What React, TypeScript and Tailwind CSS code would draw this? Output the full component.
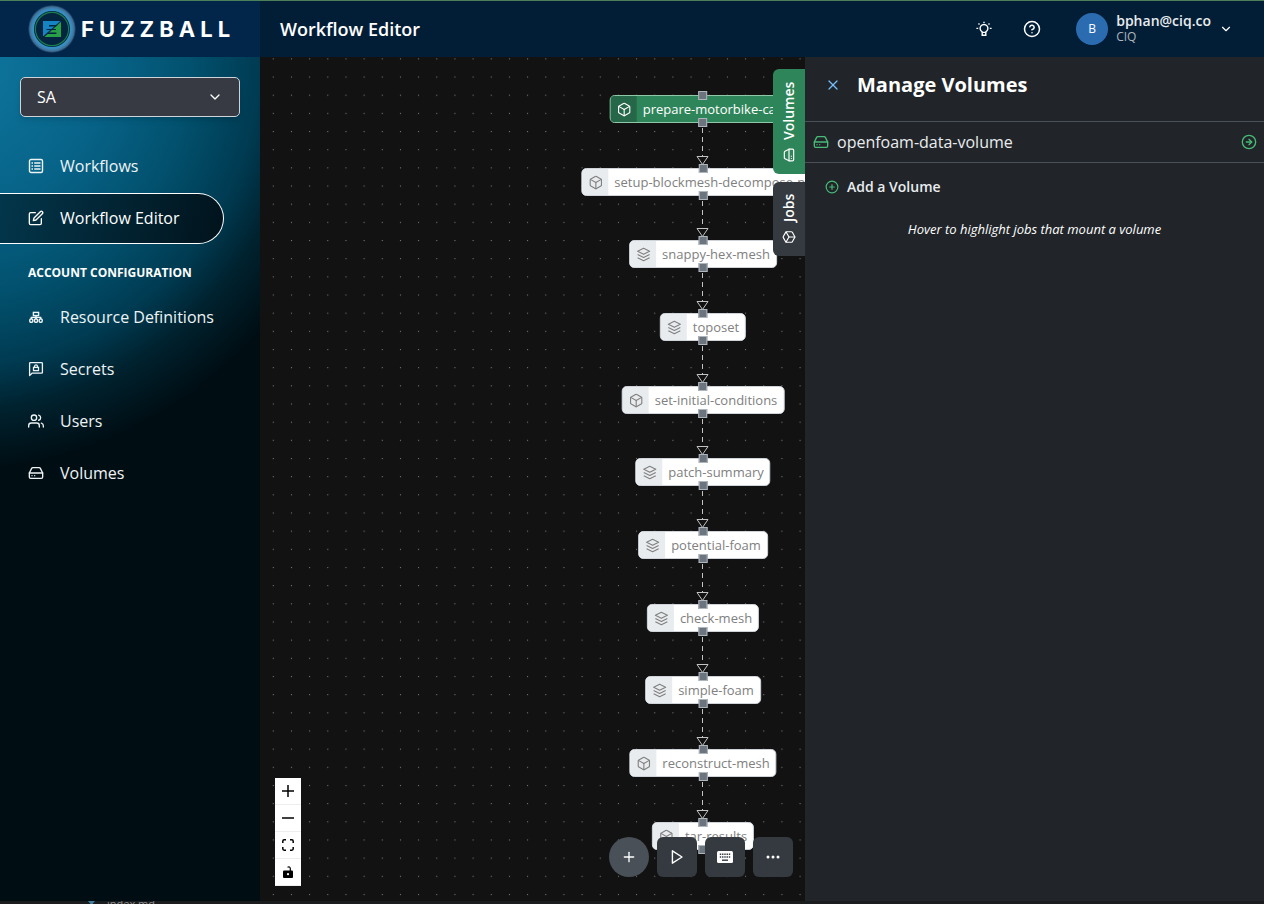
import type { ReactNode } from "react";
import { Box, ChevronDown, CircleArrowRight, CirclePlus, CircleQuestionMark, HardDrive, Plus, X } from "lucide-react";
import { BsThreeDots } from "react-icons/bs";
import { FiEdit, FiUsers } from "react-icons/fi";

type Job = { name: string; top: number; kind: "box" | "layers"; active?: boolean };

const jobs: Job[] = [
  { name: "prepare-motorbike-case", top: 38, kind: "box", active: true },
  { name: "setup-blockmesh-decompose-par", top: 111, kind: "box" },
  { name: "snappy-hex-mesh", top: 183, kind: "layers" },
  { name: "toposet", top: 256, kind: "layers" },
  { name: "set-initial-conditions", top: 329, kind: "box" },
  { name: "patch-summary", top: 401, kind: "layers" },
  { name: "potential-foam", top: 474, kind: "layers" },
  { name: "check-mesh", top: 547, kind: "layers" },
  { name: "simple-foam", top: 619, kind: "layers" },
  { name: "reconstruct-mesh", top: 692, kind: "box" },
  { name: "tar-results", top: 765, kind: "box" },
];

function ListIcon() {
  return (
    <svg width="16" height="16" viewBox="0 0 16 16" fill="none" stroke="currentColor" strokeWidth="1.4">
      <rect x="1.5" y="1.5" width="13" height="13" rx="1.5" />
      <path d="M3.5 5h1.5M6.2 5h6.3M3.5 8h1.5M6.2 8h6.3M3.5 11h1.5M6.2 11h6.3" />
    </svg>
  );
}

function HierarchyIcon() {
  return (
    <svg width="16" height="16" viewBox="0 0 16 16" fill="none" stroke="currentColor" strokeWidth="1.4">
      <rect x="5.4" y="3.4" width="5.2" height="3.2" />
      <path d="M8 6.6v3.4M3.3 10V8.4h9.4V10" />
      <rect x="1.8" y="10" width="3" height="3.2" rx="1" />
      <rect x="6.5" y="10" width="3" height="3.2" rx="1" />
      <rect x="11.2" y="10" width="3" height="3.2" rx="1" />
    </svg>
  );
}

function SecretIcon() {
  return (
    <svg width="16" height="16" viewBox="0 0 16 16" fill="none" stroke="currentColor" strokeWidth="1.3">
      <path d="M1.6 14.6V2.4q0-.8.8-.8h11.2q.8 0 .8.8v9q0 .8-.8.8H4z" strokeLinejoin="round" />
      <rect x="5.5" y="6.4" width="5" height="3.2" />
      <path d="M6.5 6.2V5.4a1.5 1.5 0 0 1 3 0v.8" />
    </svg>
  );
}

function BulbIcon() {
  return (
    <svg width="16" height="16" viewBox="0 0 16 16" fill="none" stroke="currentColor" strokeWidth="1.4">
      <path d="M6.2 11.4v-.6a3.9 3.9 0 1 1 3.6 0v.6z" />
      <path d="M6.2 11.4v2.8h3.6v-2.8" />
      <path d="M8 .8v1.2M2.5 2.6l1 1M13.5 2.6l-1 1M.4 7.4h1.8M13.8 7.4h1.8" />
    </svg>
  );
}

function LayersIcon() {
  return (
    <svg width="15" height="15" viewBox="0 0 16 16" fill="none" stroke="currentColor" strokeWidth="1.2" strokeLinejoin="round">
      <path d="M8 1.4 14.4 4.6 8 7.8 1.6 4.6z" />
      <path d="M1.6 8 8 11.2 14.4 8M1.6 11.4 8 14.6 14.4 11.4" />
    </svg>
  );
}

function KeyboardIcon() {
  return (
    <svg width="16" height="16" viewBox="0 0 16 16">
      <rect y="2" width="16" height="12" rx="1.5" fill="currentColor" />
      <path d="M2.8 5.2h10.4M2.8 8h10.4" stroke="#343a40" strokeWidth="1.4" strokeDasharray="1.4 .85" />
      <path d="M5 11.2h6" stroke="#343a40" strokeWidth="1.4" />
    </svg>
  );
}

function PlayIcon() {
  return (
    <svg width="16" height="16" viewBox="0 0 16 16" fill="none" stroke="currentColor" strokeWidth="1.4" strokeLinejoin="round">
      <path d="M3.4 1.8 13 8l-9.6 6.2z" />
    </svg>
  );
}

function Logo() {
  return (
    <svg width="48" height="48" viewBox="0 0 48 48">
      <defs>
        <radialGradient id="glow">
          <stop offset="0.74" stopColor="#2f97cf" />
          <stop offset="0.84" stopColor="#3d86b6" />
          <stop offset="0.93" stopColor="#3f6d94" />
          <stop offset="1" stopColor="#2a4f74" stopOpacity="0.2" />
        </radialGradient>
      </defs>
      <circle cx="24" cy="24" r="24" fill="url(#glow)" />
      <circle cx="24" cy="24" r="18" fill="#04253f" />
      <circle cx="24" cy="24" r="16.6" fill="none" stroke="#1c7d4c" strokeWidth="1.1" />
      <path d="M15 16h17.4L15.6 31H15z" fill="#1684c2" />
      <path d="M33 16.8V32H16.4z" fill="#27a047" />
      <path d="M21 20h8.6l-1.6 1.5h-7zM20 27.6h8.4V29H18.6zM19 24h9v1H18z" fill="#04253f" />
    </svg>
  );
}

function NavLink({ icon, label, active }: { icon: ReactNode; label: string; active?: boolean }) {
  return (
    <a
      href="#"
      className={
        active
          ? "flex h-[51px] w-56 items-center gap-4 rounded-r-full border border-l-0 border-white bg-[linear-gradient(100deg,#03364b,#01131c)] pb-0.5 pl-7 text-base text-white"
          : "flex h-[51px] items-center gap-4 pb-0.5 pl-7 text-base text-[#eef3f5]"
      }
    >
      {icon}
      {label}
    </a>
  );
}

function Handle({ className }: { className: string }) {
  return <span className={`absolute left-1/2 size-[9px] -translate-x-1/2 border border-[#adb5bd] bg-[#6c757d] ${className}`} />;
}

function JobNode({ job }: { job: Job }) {
  return (
    <div className="absolute left-[443px] -translate-x-1/2" style={{ top: job.top }}>
      <div
        className={
          job.active
            ? "flex h-7 items-stretch overflow-hidden rounded-[5px] border border-[#8fc7a8] bg-[#2f855a] text-white"
            : "flex h-7 items-stretch overflow-hidden rounded-[5px] border border-[#ced4da] bg-white text-[#808080]"
        }
      >
        <span className={job.active ? "flex w-[26px] items-center justify-center bg-[#276749]" : "flex w-[26px] items-center justify-center bg-[#e9ecef]"}>
          {job.kind === "box" ? <Box size={15} strokeWidth={1.8} /> : <LayersIcon />}
        </span>
        <span className="flex items-center px-1.5 pb-px text-[13px] leading-5 whitespace-nowrap">{job.name}</span>
      </div>
      <Handle className="-top-1" />
      <Handle className="-bottom-1" />
    </div>
  );
}

function Canvas() {
  return (
    <section className="relative min-w-0 flex-1 overflow-hidden bg-[#121212]">
      <svg className="absolute inset-0 size-full">
        <defs>
          <pattern id="dots" x="4.2" y="10.9" width="18.165" height="18.165" patternUnits="userSpaceOnUse">
            <circle cx="9.1" cy="9.1" r="0.6" fill="#8a8a8a" />
          </pattern>
        </defs>
        <rect width="100%" height="100%" fill="url(#dots)" />
        {jobs.slice(1).map((job, i) => (
          <g key={job.name} stroke="#c4c4c4" fill="none">
            <path d={`M442.5 ${jobs[i].top + 33}V${job.top - 12}`} strokeDasharray="5 4" />
            <path d={`M437 ${job.top - 11.5}h11l-5.5 8z`} fill="#121212" />
          </g>
        ))}
      </svg>

      {jobs.map((job) => (
        <JobNode key={job.name} job={job} />
      ))}

      <div className="absolute bottom-[15px] left-[15px] flex flex-col text-black">
        <button aria-label="zoom in" className="flex h-[27px] w-[26px] items-center justify-center border-b border-[#eee] bg-white">
          <svg width="12" height="12" viewBox="0 0 12 12" stroke="currentColor" strokeWidth="1.5">
            <path d="M6 0v12M0 6h12" />
          </svg>
        </button>
        <button aria-label="zoom out" className="flex h-[27px] w-[26px] items-center justify-center border-b border-[#eee] bg-white">
          <svg width="12" height="12" viewBox="0 0 12 12" stroke="currentColor" strokeWidth="1.5">
            <path d="M0 6h12" />
          </svg>
        </button>
        <button aria-label="fit view" className="flex h-[27px] w-[26px] items-center justify-center border-b border-[#eee] bg-white">
          <svg width="12" height="12" viewBox="0 0 12 12" fill="none" stroke="currentColor" strokeWidth="1.5">
            <path d="M.8 4V2.2Q.8.8 2.2.8H4M8 .8h1.8q1.4 0 1.4 1.4V4M11.2 8v1.8q0 1.4-1.4 1.4H8M4 11.2H2.2Q.8 11.2.8 9.8V8" />
          </svg>
        </button>
        <button aria-label="toggle interactivity" className="flex h-[27px] w-[26px] items-center justify-center border-b border-[#eee] bg-white">
          <svg width="10" height="12" viewBox="0 0 10 12">
            <path d="M4.5 1.2Q7 0 7.3 2.5V5" fill="none" stroke="currentColor" strokeWidth="1.2" />
            <rect y="4.6" width="10" height="7.4" rx="1" />
            <circle cx="5" cy="8.2" r="1.1" fill="#fff" />
          </svg>
        </button>
      </div>

      <div className="absolute top-3 right-0 flex flex-col gap-2">
        <button className="flex h-[105px] w-8 rotate-180 items-center justify-center gap-2 rounded-r-md bg-[#2f855a] text-sm font-semibold text-white [writing-mode:vertical-rl]">
          <HardDrive size={14} className="rotate-90" />
          Volumes
        </button>
        <button className="flex h-[74px] w-8 rotate-180 items-center justify-center gap-2 rounded-r-md bg-[#343a40] text-sm font-semibold text-white [writing-mode:vertical-rl]">
          <Box size={14} className="rotate-90" />
          Jobs
        </button>
      </div>

      <div className="absolute right-3 bottom-6 flex gap-2 text-white">
        <button aria-label="Add job" className="flex size-10 items-center justify-center rounded-full bg-[#495057]">
          <Plus size={16} strokeWidth={2} />
        </button>
        <button aria-label="Run workflow" className="flex size-10 items-center justify-center rounded-md bg-[#343a40]">
          <PlayIcon />
        </button>
        <button aria-label="Keyboard shortcuts" className="flex size-10 items-center justify-center rounded-md bg-[#343a40]">
          <KeyboardIcon />
        </button>
        <button aria-label="More" className="flex size-10 items-center justify-center rounded-md bg-[#343a40]">
          <BsThreeDots size={16} />
        </button>
      </div>
    </section>
  );
}

export default function App() {
  return (
    <div className="flex h-screen flex-col overflow-hidden bg-[#121212] font-['Open_Sans',sans-serif] text-white">
      <header className="flex h-[57px] shrink-0 border-t border-[#4c8059] bg-[#021e36]">
        <div className="flex w-[260px] shrink-0 items-center gap-[5px] bg-[#02264a] pl-7">
          <Logo />
          <span className="font-['Inter',sans-serif] text-[22px] font-bold tracking-[5px]">FUZZBALL</span>
        </div>
        <div className="flex flex-1 items-center pr-[31px] pb-px pl-5">
          <h1 className="flex-1 text-lg font-semibold">Workflow Editor</h1>
          <button aria-label="Toggle theme" className="flex w-12 justify-center">
            <BulbIcon />
          </button>
          <button aria-label="Help" className="flex w-12 justify-center">
            <CircleQuestionMark size={18} strokeWidth={2} />
          </button>
          <button className="ml-5 flex items-center gap-2 text-left">
            <span className="flex size-8 items-center justify-center rounded-full bg-[#2b6cb0] text-xs font-medium">B</span>
            <span className="flex flex-col">
              <span className="text-sm leading-4 font-semibold text-[#e9ecef]">bphan@ciq.co</span>
              <span className="text-xs leading-4 text-[#adb5bd]">CIQ</span>
            </span>
            <ChevronDown size={14} />
          </button>
        </div>
      </header>

      <main className="flex min-h-0 flex-1">
        <nav className="flex w-[260px] shrink-0 flex-col gap-px bg-[radial-gradient(circle_at_-50px_0px,#0d7299_50px,#076287_160px,#02516e_240px,#003b52_310px,#00222f_355px,#000d13_415px)] pt-5">
          <button className="mx-5 mb-[23px] flex h-10 items-center justify-between rounded-[5px] border border-[#ced4da] bg-[#373a43] px-4 pb-px text-base shadow-md">
            SA
            <ChevronDown size={16} />
          </button>
          <NavLink icon={<ListIcon />} label="Workflows" />
          <NavLink icon={<FiEdit size={16} />} label="Workflow Editor" active />
          <h2 className="flex h-[46px] items-center pt-2.5 pl-7 text-xs font-bold">ACCOUNT CONFIGURATION</h2>
          <NavLink icon={<HierarchyIcon />} label="Resource Definitions" />
          <NavLink icon={<SecretIcon />} label="Secrets" />
          <NavLink icon={<FiUsers size={16} />} label="Users" />
          <NavLink icon={<HardDrive size={16} />} label="Volumes" />
        </nav>

        <Canvas />

        <aside className="w-[459px] shrink-0 bg-[#212529]">
          <div className="flex h-16 items-center gap-4 pb-2 pl-5">
            <button aria-label="Close" className="text-[#74c0fc]">
              <X size={16} strokeWidth={1.8} />
            </button>
            <h2 className="text-xl font-bold">Manage Volumes</h2>
          </div>
          <button className="flex h-[42px] w-full items-center gap-2 border-y border-[#495057] pr-[7px] pl-2 text-left text-base text-[#e9ecef]">
            <HardDrive size={16} className="text-[#48bb78]" />
            <span className="flex-1">openfoam-data-volume</span>
            <CircleArrowRight size={16} strokeWidth={2} className="text-[#48bb78]" />
          </button>
          <button className="mt-3 ml-5 flex h-6 items-center gap-2 text-sm font-semibold text-[#e9ecef]">
            <CirclePlus size={14} className="text-[#48bb78]" />
            Add a Volume
          </button>
          <p className="mt-[22px] text-center text-[13px] leading-4 italic">Hover to highlight jobs that mount a volume</p>
        </aside>
      </main>

      <footer className="flex h-[3px] shrink-0 gap-3 overflow-hidden bg-[#1b1c1e] pl-[88px] text-[11px] leading-[6px] text-[#8b8b8b]">
        <svg width="7" height="3" viewBox="0 0 7 3" fill="#3f7f9c">
          <path d="M0 0h7L4.5 3h-2z" />
        </svg>
        <span>index.md</span>
      </footer>
    </div>
  );
}
